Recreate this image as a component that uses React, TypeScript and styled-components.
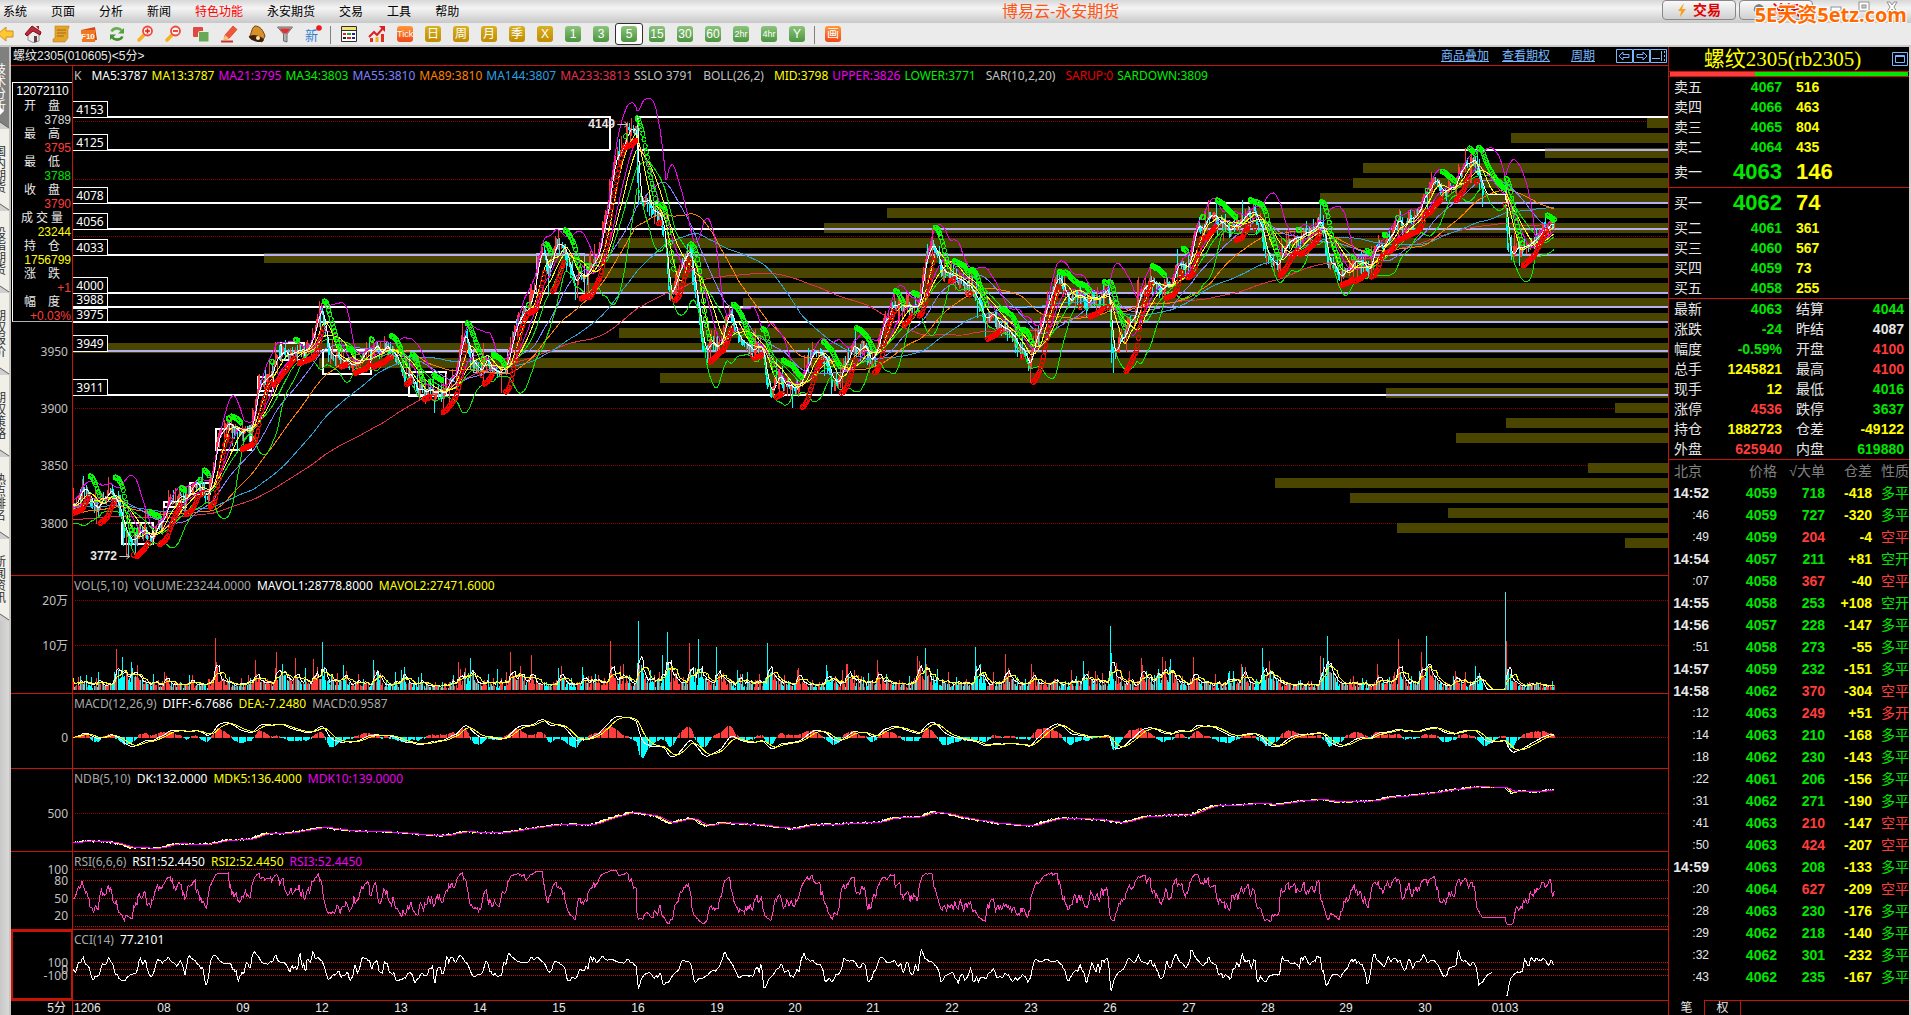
import React from "react";
import styled, { createGlobalStyle, css } from "styled-components";

const RED = "#c81408";
const UP = "#ff3c3c";
const DOWN = "#00ffff";
const GREEN = "#00e600";
const YELLOW = "#ffff00";
const PALE = "#e8e8e8";
const SANS = `"Liberation Sans", "Noto Sans CJK SC", sans-serif`;
const CHART = `"Noto Sans", "Noto Sans CJK SC", sans-serif`;

const Global = createGlobalStyle`
  * { box-sizing: border-box; }
  html, body { margin: 0; padding: 0; background: #000; }
  body { font: 12px/14px ${SANS}; color: ${PALE}; overflow: hidden; }
  button { font: inherit; padding: 0; border: 0; background: none; color: inherit; }
  table { border-collapse: separate; border-spacing: 0; table-layout: fixed; width: 100%; }
  td, th { padding: 0; font-weight: normal; text-align: left; white-space: nowrap; }
  svg { display: block; }
`;

/* ---------- market data ---------- */

type Pt = [number, number];

const X0 = 73;
const X1 = 1668;
const PITCH = 1.142;

const pricePath: Pt[] = [
  [73, 505], [78, 495], [82, 487], [88, 498], [94, 512], [100, 505], [106, 498], [110, 492], [116, 500], [121, 512],
  [124, 530], [130, 540], [136, 533], [142, 530], [148, 538], [154, 533], [160, 525], [164, 510], [170, 505], [178, 503],
  [186, 502], [190, 490], [196, 488], [205, 492], [211, 482], [214, 470], [216, 440], [222, 438], [228, 430], [236, 432],
  [244, 430], [250, 425], [254, 405], [258, 385], [265, 380], [272, 378], [276, 362], [282, 350], [290, 348], [300, 350],
  [306, 348], [310, 340], [314, 325], [318, 308], [321, 310], [324, 330], [328, 350], [336, 355], [342, 362], [350, 370],
  [357, 365], [362, 362], [370, 352], [378, 355], [386, 350], [393, 352], [400, 365], [408, 375], [416, 385], [430, 390],
  [440, 395], [448, 385], [455, 372], [459, 350], [462, 338], [467, 340], [471, 362], [478, 370], [486, 365], [495, 372],
  [505, 368], [509, 355], [514, 335], [519, 315], [527, 310], [533, 290], [537, 258], [543, 255], [548, 268], [556, 250],
  [564, 250], [570, 262], [575, 278], [580, 270], [586, 278], [590, 270], [596, 258], [600, 240], [605, 215], [611, 175],
  [617, 158], [623, 150], [628, 130], [632, 128], [636, 135], [638, 200], [640, 205], [646, 205], [652, 215], [660, 218],
  [664, 240], [669, 300], [676, 275], [682, 262], [688, 250], [691, 260], [694, 290], [698, 310], [701, 330], [704, 355],
  [710, 348], [718, 348], [724, 325], [728, 310], [732, 318], [738, 332], [745, 345], [755, 350], [762, 352], [765, 375],
  [771, 395], [778, 378], [785, 388], [792, 390], [800, 380], [806, 360], [814, 345], [820, 348], [826, 365], [832, 385],
  [838, 388], [843, 362], [850, 355], [862, 350], [870, 360], [876, 352], [880, 335], [885, 315], [892, 305], [902, 308],
  [912, 305], [918, 300], [922, 275], [926, 255], [932, 248], [938, 258], [948, 270], [960, 278], [972, 290], [980, 315],
  [990, 318], [1000, 328], [1010, 338], [1018, 345], [1024, 350], [1029, 362], [1033, 345], [1040, 325], [1048, 300],
  [1054, 285], [1060, 280], [1068, 300], [1076, 295], [1085, 300], [1095, 295], [1108, 290], [1111, 345], [1115, 350],
  [1120, 340], [1128, 325], [1136, 305], [1142, 290], [1150, 285], [1160, 290], [1170, 285], [1175, 270], [1184, 268],
  [1190, 255], [1194, 235], [1200, 225], [1208, 215], [1215, 220], [1225, 225], [1235, 228], [1245, 218], [1255, 215],
  [1260, 225], [1266, 255], [1275, 262], [1284, 245], [1294, 235], [1302, 238], [1312, 232], [1318, 220], [1325, 235],
  [1328, 265], [1335, 270], [1345, 275], [1355, 262], [1362, 270], [1370, 265], [1376, 245], [1386, 240], [1394, 232],
  [1404, 225], [1415, 215], [1423, 200], [1428, 190], [1436, 190], [1445, 188], [1455, 180], [1462, 166], [1468, 160],
  [1475, 162], [1478, 175], [1483, 194], [1505, 194], [1507, 250], [1511, 260], [1516, 240], [1526, 245], [1536, 238],
  [1545, 230], [1550, 222], [1555, 225],
];

const ndbPath: Pt[] = [
  [73, 843], [85, 841], [110, 842], [122, 845], [128, 848], [160, 848], [170, 844], [210, 844], [225, 840], [250, 839],
  [262, 834], [285, 833], [300, 831], [321, 827], [350, 831], [390, 832], [440, 836], [460, 832], [500, 833], [530, 828],
  [565, 824], [590, 825], [610, 818], [630, 812], [640, 814], [655, 816], [668, 823], [690, 818], [705, 826], [720, 823],
  [760, 825], [790, 829], [810, 825], [840, 824], [880, 822], [890, 818], [918, 817], [930, 812], [950, 815], [975, 820],
  [1000, 824], [1030, 826], [1050, 820], [1060, 818], [1100, 820], [1120, 823], [1145, 816], [1190, 815], [1200, 810],
  [1212, 806], [1240, 805], [1260, 803], [1270, 805], [1300, 801], [1320, 799], [1335, 802], [1370, 801], [1385, 798],
  [1420, 794], [1460, 789], [1468, 787], [1505, 787], [1510, 793], [1520, 791], [1535, 792], [1550, 790], [1555, 790],
];

/* x, top of the bar, 1 = rising */
const spikes: [number, number, number][] = [
  [116, 650, 1], [122, 657, 0], [131, 663, 0], [137, 665, 1], [164, 672, 1], [215, 638, 1], [255, 660, 1], [276, 653, 1],
  [282, 664, 0], [294, 658, 1], [313, 659, 1], [322, 642, 0], [343, 665, 0], [373, 660, 0], [401, 670, 0], [458, 662, 1],
  [470, 658, 0], [510, 652, 1], [519, 666, 1], [531, 655, 1], [558, 668, 0], [582, 667, 0], [610, 641, 1], [623, 664, 1],
  [638, 621, 0], [662, 655, 0], [667, 632, 0], [689, 643, 1], [698, 639, 0], [716, 647, 0], [767, 643, 0], [797, 670, 1],
  [826, 665, 0], [846, 664, 1], [877, 660, 1], [917, 656, 1], [925, 648, 0], [975, 647, 0], [1005, 654, 1],
  [1031, 664, 1], [1083, 661, 0], [1110, 626, 0], [1141, 658, 1], [1162, 657, 1], [1171, 659, 0], [1193, 657, 1],
  [1241, 664, 1], [1262, 648, 0], [1269, 661, 1], [1320, 656, 1], [1327, 636, 0], [1377, 664, 1], [1398, 639, 1],
  [1421, 653, 1], [1426, 636, 0], [1455, 671, 1], [1475, 666, 0], [1506, 641, 1],
];

const profile: (number | null)[] = [
  1647, 1511, 1545, 1363, 1353, 1320, 887, 824, 618, 264, 602, 586, 743, 926, 619, 73, 319, 660, 1386, 1615, 1506, 1456,
  null, 1588, 1275, 1350, 1448, 1397, 1625,
];

const rnd = (() => {
  let s = 20230103;
  return () => {
    s = (s * 1664525 + 1013904223) % 4294967296;
    return s / 4294967296;
  };
})();

const interp = (pts: Pt[], x: number) => {
  for (let i = 1; i < pts.length; i++) {
    if (x <= pts[i][0]) {
      const [ax, ay] = pts[i - 1];
      const [bx, by] = pts[i];
      return ay + ((by - ay) * (x - ax)) / (bx - ax);
    }
  }
  return pts[pts.length - 1][1];
};

const xs: number[] = [];
for (let x = X0; x <= 1555; x += PITCH) xs.push(x);
const N = xs.length;
const halted = (x: number) => x > 1483 && x < 1505;

let drift = 0;
const close = xs.map((x) => {
  if (halted(x)) return 194;
  drift = drift * 0.75 + (rnd() - 0.5) * 9;
  return interp(pricePath, x) + drift;
});
const open = close.map((c, i) => (i ? close[i - 1] : c + 2));
const wick = (i: number) => (halted(xs[i]) ? 0 : rnd() * rnd() * 9 + rnd() ** 8 * 16);
const high = close.map((c, i) => Math.min(c, open[i]) - wick(i));
const low = close.map((c, i) => Math.max(c, open[i]) + wick(i));

const sma = (src: number[], n: number, before?: number) =>
  src.map((_, i) => {
    let sum = 0;
    let k = 0;
    for (let j = i - n + 1; j <= i; j++) {
      if (j >= 0) {
        sum += src[j];
        k++;
      } else if (before !== undefined) {
        sum += before;
        k++;
      }
    }
    return sum / k;
  });

const ema = (src: number[], n: number) => {
  let e = src[0];
  return src.map((v) => (e += ((v - e) * 2) / (n + 1)));
};

const line = (ys: number[], skip?: (x: number) => boolean) => {
  let pen = "M";
  return ys
    .map((y, i) => {
      if (skip && skip(xs[i])) {
        pen = "M";
        return "";
      }
      const out = `${pen}${xs[i].toFixed(1)} ${y.toFixed(1)}`;
      pen = "L";
      return out;
    })
    .join("");
};

const mid = sma(close, 26, 512);
const dev = close.map((_, i) => {
  let s = 0;
  for (let j = i - 25; j <= i; j++) s += ((j < 0 ? 512 + (j % 2 ? 6 : -6) : close[j]) - mid[i]) ** 2;
  return Math.sqrt(s / 26) * 2;
});

const averages: [string, string][] = [
  [line(sma(close, 233, 520)), "#e03050"],
  [line(sma(close, 144, 508)), "#2ea0d8"],
  [line(sma(close, 89, 514)), "#ff8000"],
  [line(sma(close, 55, 506)), "#8080ff"],
  [line(sma(close, 34, 508)), "#00f000"],
  [line(sma(close, 21, 508)), "#f000f0"],
  [line(sma(close, 13, 506)), "#ffff00"],
  [line(mid), "#ffff00"],
  [line(mid.map((m, i) => m - dev[i])), "#f000f0"],
  [line(mid.map((m, i) => m + dev[i])), "#00f000"],
  [line(sma(close, 5)), "#ffffff"],
];

/* parabolic stop-and-reverse dots */
const sar = (() => {
  let rising = true;
  let value = low[0] + 4;
  let extreme = high[0];
  let af = 0.02;
  let up = "";
  let down = "";
  for (let i = 1; i < N; i++) {
    value += af * (extreme - value);
    if (rising ? low[i] > value : high[i] < value) {
      rising = !rising;
      value = extreme;
      extreme = rising ? high[i] : low[i];
      af = 0.02;
    } else if (rising ? high[i] < extreme : low[i] > extreme) {
      extreme = rising ? high[i] : low[i];
      af = Math.min(0.2, af + 0.02);
    }
    const dot = `M${(xs[i] - 2).toFixed(1)} ${value.toFixed(1)}a2 2.5 0 1 0 4 0a2 2.5 0 1 0 -4 0`;
    if (rising) up += dot;
    else down += dot;
  }
  return { up, down };
})();

const bars = (pick: (i: number) => boolean, top: (i: number) => number, bottom: (i: number) => number) => {
  let d = "";
  for (let i = 0; i < N; i++) {
    if (pick(i)) d += `M${Math.round(xs[i]) + 0.5} ${top(i).toFixed(1)}V${bottom(i).toFixed(1)}`;
  }
  return d;
};

const isUp = (i: number) => close[i] <= open[i];
const wickUp = bars(isUp, (i) => high[i], (i) => low[i] + 1);
const wickDown = bars((i) => !isUp(i), (i) => high[i], (i) => low[i] + 1);

const volume = xs.map((x) => (halted(x) ? 0.5 : 2 + rnd() * 6 + rnd() ** 8 * 14));
spikes.forEach(([sx, top]) => {
  const at = Math.round((sx - X0) / PITCH);
  volume[at] = 690 - top;
  for (let k = 1; k < 14; k++) {
    if (at + k < N && !halted(xs[at + k])) volume[at + k] += (690 - top) * 0.4 * Math.exp(-k / 4) * (0.4 + rnd());
    if (k < 6 && at - k >= 0 && !halted(xs[at - k])) volume[at - k] += (690 - top) * 0.2 * Math.exp(-k / 3) * rnd();
  }
});
const volUp = xs.map((_, i) => isUp(i));
spikes.forEach(([sx, , up]) => {
  volUp[Math.round((sx - X0) / PITCH)] = up === 1;
});
const volRed = bars((i) => volUp[i], (i) => 690 - volume[i], () => 690);
const volCyan = bars((i) => !volUp[i], (i) => 690 - volume[i], () => 690);
const mavol1 = line(sma(volume, 5).map((v) => 690 - v));
const mavol2 = line(sma(volume, 10).map((v) => 690 - v));

const e12 = ema(close, 12);
const e26 = ema(close, 26);
const diff = e12.map((v, i) => Math.tanh(((e26[i] - v) * 0.9) / 30) * 30);
const dea = ema(diff, 9);
const hist = diff.map((v, i) => (v - dea[i]) * 2);
const macdRed = bars((i) => hist[i] > 0, (i) => 736.5 - hist[i], () => 738);
const macdCyan = bars((i) => hist[i] <= 0, () => 737, (i) => 738 - hist[i]);
const diffLine = line(diff.map((v) => 737 - v));
const deaLine = line(dea.map((v) => 737 - v));

const ndbRaw = xs.map((x) => interp(ndbPath, x) + (halted(x) ? 0 : (rnd() - 0.5) * 2));
const ndb1 = line(ndbRaw);
const ndb2 = line(sma(ndbRaw, 5));
const ndb3 = line(sma(ndbRaw, 10));

const rsiLine = (() => {
  let gain = 2;
  let loss = 2;
  return line(
    close.map((c, i) => {
      const move = i ? close[i - 1] - c : 0;
      if (!halted(xs[i])) {
        gain += (Math.max(move, 0) - gain) / 7;
        loss += (Math.max(-move, 0) - loss) / 7;
      }
      return 926.5 - ((gain + 0.1) / (gain + loss + 0.2)) * 57.3;
    })
  );
})();

const cciLine = (() => {
  const tp = sma(close.map((c, i) => -(c + high[i] + low[i]) / 3), 2);
  const m = sma(tp, 14);
  return line(
    tp.map((t, i) => {
      let d = 0;
      for (let j = i - 13; j <= i; j++) d += j < 0 ? 4 : Math.abs(tp[j] - m[i]);
      d /= 14;
      const v = d < 0.01 ? 0 : (t - m[i]) / (0.015 * d);
      return Math.min(996, 969 - v * 0.0675);
    }),
    (x) => x > 1493 && x < 1506
  );
})();

const levels: [number, number][] = [
  [4153, 116], [4125, 149], [4078, 202], [4056, 228], [4033, 254], [4000, 292], [3988, 306], [3975, 321], [3949, 350],
  [3911, 394],
];

const rangeBoxes: [number, number, number, number][] = [
  [122, 523, 31, 21], [164, 502, 22, 5], [190, 483, 20, 11], [216, 429, 35, 21], [258, 377, 15, 14], [281, 343, 23, 17],
  [323, 350, 48, 24], [409, 372, 37, 24],
];

const faintBoxes: [number, number, number, number][] = [
  [473, 349, 34, 23], [536, 253, 48, 39],
];

/* ---------- shell ---------- */

const Shell = styled.div`
  display: flex;
  flex-direction: column;
  height: 100vh;
  min-width: 1200px;
`;

const MenuBar = styled.header`
  flex: none;
  display: flex;
  align-items: center;
  height: 23px;
  padding-left: 3px;
  background: linear-gradient(#d8d8d8, #f4f4f4 35%, #e4e4e4 60%, #c8c8c8);
  color: #000;
`;

const Menus = styled.nav`
  display: flex;
  gap: 24px;
`;

const MenuItem = styled.button<{ $hot?: boolean }>`
  color: ${(p) => (p.$hot ? "#ff0000" : "#000")};
  line-height: 18px;
`;

const Title = styled.h1`
  flex: 1;
  margin: 0;
  text-align: center;
  font-size: 16px;
  line-height: 20px;
  font-weight: normal;
  color: #ff5414;
`;

const WindowArea = styled.div`
  position: relative;
  display: flex;
  align-items: flex-start;
  align-self: stretch;
  gap: 3px;
  width: 249px;
`;

const PillButton = styled.button`
  display: flex;
  align-items: center;
  justify-content: center;
  gap: 6px;
  width: 74px;
  height: 20px;
  border: 1px solid #888;
  border-radius: 4px;
  background: linear-gradient(#fafafa, #d0d0d0);
  color: #e00000;
  font-size: 14px;
  font-weight: bold;
`;

const WindowButtons = styled.div`
  display: flex;
  gap: 16px;
  padding: 1px 0 0 14px;
`;

const Watermark = styled.strong`
  position: absolute;
  right: 4px;
  top: 2px;
  font: bold 20px/26px "Open Sans", "Noto Sans CJK SC", sans-serif;
  color: #ff6a00;
  white-space: nowrap;
  text-shadow: 1px 1px 0 #fff, -1px -1px 0 #fff, 1px -1px 0 #fff, -1px 1px 0 #fff;
`;

const ToolBar = styled.div`
  flex: none;
  display: flex;
  align-items: center;
  height: 24px;
  border-bottom: 2px solid #ccc8c6;
  background: #ebebeb;
  overflow: hidden;
`;

const Tool = styled.button<{ $active?: boolean }>`
  flex: none;
  display: grid;
  place-items: center;
  width: 28px;
  height: 22px;
  ${(p) =>
    p.$active &&
    css`
      border: 1px solid #303030;
      border-radius: 3px;
      background: #fff;
    `}
`;

const ToolShift = styled.div`
  display: flex;
  margin-left: -9px;
`;

const Badge = styled.span<{ $tone: "gold" | "green" | "orange" }>`
  display: grid;
  place-items: center;
  width: 16px;
  height: 16px;
  border-radius: 3px;
  color: #fff;
  font-size: 12px;
  line-height: 16px;
  overflow: hidden;
  background: ${(p) =>
    p.$tone === "gold"
      ? "linear-gradient(#d8b020, #c08c00)"
      : p.$tone === "green"
      ? "linear-gradient(#8cc47c, #4c9440)"
      : "linear-gradient(#ff9838, #f04818)"};
`;

const SmallBadge = styled(Badge)`
  font-size: 9px;
`;

const Divider = styled.span`
  width: 1px;
  height: 18px;
  margin: 2px 4px 0 3px;
  background: #808080;
`;

const Body = styled.div`
  flex: 1;
  min-height: 0;
  display: grid;
  grid-template-columns: 11px minmax(0, 1fr) 241px;
  border-right: 2px solid #d8d0d0;
`;

const SideBar = styled.nav`
  border-right: 2px solid #c8c4c0;
  background: linear-gradient(90deg, #c8c8c8, #d8d8d8);
  overflow: hidden;
`;

const SideTab = styled.button<{ $active?: boolean }>`
  position: relative;
  display: flex;
  flex-direction: column;
  align-items: center;
  justify-content: center;
  width: 9px;
  height: 82px;
  font-size: 12px;
  line-height: 12px;
  background: ${(p) => (p.$active ? "#808080" : "#f0efe8")};
  color: ${(p) => (p.$active ? "#fff" : "#303030")};
  overflow: hidden;
`;

const SideText = styled.span`
  width: 12px;
  margin: 0 3px 0 -6px;
  word-break: break-all;
`;

const Slant = styled.svg`
  position: absolute;
  left: 0;
  bottom: 0;
`;

/* ---------- chart ---------- */

const ChartArea = styled.main`
  display: grid;
  grid-template-rows: 19px 510fr 118fr 75fr 83fr 78fr 71fr 14px;
  min-height: 0;
  background: #000;
`;

const ChartHead = styled.div`
  display: flex;
  align-items: center;
  gap: 13px;
  padding-left: 2px;
  border-bottom: 1px solid ${RED};
`;

const Symbol = styled.span`
  flex: 1;
`;

const HeadLink = styled.a`
  color: #78b8ff;
  text-decoration: underline;
`;

const PeriodLink = styled(HeadLink)`
  margin: 0 8px;
`;

const Arrows = styled.div`
  padding-right: 1px;
`;

const Pane = styled.section`
  display: grid;
  grid-template-columns: 62px minmax(0, 1fr);
  min-height: 0;
  border-bottom: 1px solid ${RED};
`;

const Axis = styled.div<{ $focus?: boolean }>`
  position: relative;
  border-right: 1px solid ${RED};
  ${(p) =>
    p.$focus &&
    css`
      border: 1px solid ${RED};
      box-shadow: inset 0 0 0 1px ${RED};
    `}
`;

const Scale = styled.span`
  position: absolute;
  right: 4px;
  font: 12px/14px ${CHART};
  color: #c0c0c0;
  transform: translateY(-50%);
`;

const Plot = styled.div`
  position: relative;
  min-width: 0;
  min-height: 0;
  overflow: hidden;
`;

const Drawing = styled.svg`
  position: absolute;
  inset: 0;
  width: 100%;
  height: 100%;
  fill: none;
`;

const Legend = styled.div<{ $main?: boolean }>`
  position: relative;
  display: flex;
  gap: ${(p) => (p.$main ? "4px" : "6px")};
  padding: 2px 1px;
  font: 12px/16px ${CHART};
  white-space: pre;
`;

const Tint = styled.span<{ $c: string; $gap?: boolean }>`
  color: ${(p) => p.$c};
  margin-right: ${(p) => (p.$gap ? "6px" : "0")};
`;

const LevelTag = styled.span<{ $short?: boolean }>`
  position: absolute;
  left: -1px;
  width: 36px;
  height: ${(p) => (p.$short ? "14px" : "17px")};
  border: 1px solid #fff;
  background: #000;
  color: #fff;
  text-align: center;
  font: 12px/${(p) => (p.$short ? "12px" : "15px")} ${CHART};
`;

const Mark = styled.span`
  position: absolute;
  display: flex;
  align-items: center;
  font: bold 12px/14px ${SANS};
  color: #e8e8e8;
  transform: translate(-100%, -50%);
`;

const InfoBox = styled.dl`
  margin: 16px 0 0 1px;
  border: 1px solid #fff;
  border-right: 0;
  border-bottom-color: #b0b0b0;
  height: 240px;
  text-align: right;
`;

const InfoTime = styled.p`
  margin: 0;
  text-align: center;
  line-height: 17px;
  color: #fff;
`;

const InfoLabel = styled.dt<{ $wide?: boolean }>`
  display: flex;
  justify-content: space-between;
  padding: ${(p) => (p.$wide ? "0 9px 0 8px" : "0 12px 0 11px")};
  line-height: 13px;
`;

const InfoValue = styled.dd<{ $c: string }>`
  margin: 0;
  padding-right: 1px;
  line-height: 15px;
  color: ${(p) => p.$c};
`;

const TimeRow = styled.div`
  display: grid;
  grid-template-columns: 62px minmax(0, 1fr);
  line-height: 14px;
`;

const Period = styled.div`
  padding-right: 6px;
  border-right: 1px solid ${RED};
  text-align: right;
`;

const TimeTrack = styled.div`
  position: relative;
`;

const TimeMark = styled.span<{ $first?: boolean }>`
  position: absolute;
  transform: ${(p) => (p.$first ? "none" : "translateX(-50%)")};
`;

/* ---------- quote ---------- */

const Quote = styled.aside`
  display: flex;
  flex-direction: column;
  border-left: 1px solid ${RED};
  background: #000;
  font-size: 14px;
  overflow: hidden;
`;

const QuoteHead = styled.div`
  display: grid;
  grid-template-columns: 1fr 16px;
  align-items: center;
  padding: 0 1px 0 4px;
  height: 24px;
`;

const QuoteName = styled.h2`
  margin: 0;
  text-align: center;
  color: ${YELLOW};
  font: 21px/24px "Liberation Serif", "Noto Sans CJK SC", serif;
`;

const Ratio = styled.div`
  display: flex;
  height: 6px;
  padding: 0 1px;
  border: solid ${RED};
  border-width: 1px 0;
`;

const Part = styled.span<{ $c: string; $grow: number }>`
  flex: ${(p) => p.$grow};
  background: ${(p) => p.$c};
`;

const Grid = styled.table`
  border-bottom: 1px solid ${RED};
`;

const Row = styled.tr<{ $big?: boolean }>`
  height: ${(p) => (p.$big ? "30px" : "20px")};
`;

const Name = styled.th`
  padding-left: 5px;
`;

const Val = styled.td<{ $c: string; $big?: boolean; $left?: boolean }>`
  color: ${(p) => p.$c};
  font-weight: bold;
  font-size: ${(p) => (p.$big ? "22px" : "14px")};
  text-align: ${(p) => (p.$left ? "left" : "right")};
  padding-left: ${(p) => (p.$left ? "14px" : "0")};
`;

const Name2 = styled(Name)`
  padding-left: 14px;
`;

const LastVal = styled(Val)`
  padding-right: 5px;
`;

const TickHead = styled.th<{ $left?: boolean }>`
  height: 22px;
  color: #808080;
  text-align: ${(p) => (p.$left ? "left" : "right")};
  padding-left: ${(p) => (p.$left ? "5px" : "0")};
`;

const TickRow = styled.tr`
  height: 22px;
`;

const TickTime = styled.td<{ $minute: boolean }>`
  text-align: right;
  font-size: ${(p) => (p.$minute ? "14px" : "12px")};
  font-weight: ${(p) => (p.$minute ? "bold" : "normal")};
`;

const Nature = styled.td<{ $c: string }>`
  padding-left: 9px;
  color: ${(p) => p.$c};
`;

const NatureHead = styled(TickHead)`
  padding-left: 9px;
`;

const Tabs = styled.div`
  display: flex;
  height: 15px;
  margin-top: auto;
`;

const Tab = styled.button<{ $on?: boolean }>`
  width: 36px;
  border: solid ${RED};
  border-width: ${(p) => (p.$on ? "0 1px 0 0" : "1px 1px 0 0")};
  font-size: 12px;
  line-height: 14px;
`;

const TabRest = styled.span`
  flex: 1;
  border-top: 1px solid ${RED};
`;

/* ---------- toolbar drawings ---------- */

const Pic = ({ children }: { children: React.ReactNode }) => (
  <svg width="18" height="18" viewBox="0 0 18 18" fill="none" aria-hidden="true">
    {children}
  </svg>
);

const Lens = ({ plus }: { plus?: boolean }) => (
  <Pic>
    <path d="M3 15L7.500 10.500" stroke="#f8b020" strokeWidth="3.6" strokeLinecap="round" />
    <circle cx="11.500" cy="6" r="4.500" fill="#fff4f0" stroke="#f04838" strokeWidth="1.8" />
    <path d={plus ? "M9 6h5M11.500 3.500v5" : "M9 6h5"} stroke="#e02020" strokeWidth="1.6" />
  </Pic>
);

const pictures: [string, React.ReactNode][] = [
  ["后退", <Pic><path d="M2 9l8-7v4h7v6h-7v4z" fill="#ffc832" stroke="#d09010" /></Pic>],
  ["首页", <Pic><path d="M4 8l5-5 6 5v8l-6 1.500L4 15z" fill="#ececec" stroke="#909090" /><path d="M1 9l7-8 9 6-1 3-7-4-6 5z" fill="#c02838" stroke="#801018" /><path d="M12 1h3v4" fill="#a02028" /><path d="M10 11h3v6l-3 .5z" fill="#604040" /></Pic>],
  ["公告", <Pic><path d="M3 1h14v2l-1 1v9l-3 4H1v-3l2-1z" fill="#e4a42c" stroke="#c08018" strokeWidth=".6" /><path d="M5 5h9M5 8h9M5 11h7" stroke="#a06c10" /></Pic>],
  ["F10", <Pic><path d="M1 5l14-3 2 13-14 2z" fill="#d84818" /><path d="M1 5h14v12H2z" fill="#f07820" /><text x="1" y="14" fontSize="8" fontWeight="bold" fill="#fff" fontFamily="Liberation Sans">F10</text></Pic>],
  ["刷新", <Pic><path d="M3.500 6.500c2-4 8-4 10-1" stroke="#68b050" strokeWidth="2.6" /><path d="M16 3v5.500h-6z" fill="#50a040" /><path d="M14.500 11.500c-2 4-8 4-10 1" stroke="#409030" strokeWidth="2.6" /><path d="M2 15V9.500h6z" fill="#409030" /></Pic>],
  ["放大", <Lens plus />],
  ["缩小", <Lens />],
  ["叠加", <Pic><rect x="1" y="2" width="10" height="10" rx="1" fill="#e04840" /><rect x="6.500" y="6.500" width="10.500" height="10.500" rx="1" fill="#68a858" stroke="#e8f0e0" /></Pic>],
  ["画线", <Pic><path d="M5 10l8-9 4 3.500-8 9-5 1z" fill="#f05838" stroke="#c83018" strokeWidth=".6" /><path d="M5 10l4 3.500-5.500 1.500z" fill="#f8c880" /><path d="M1 16.500h12" stroke="#d03020" strokeWidth="2" /></Pic>],
  ["预警", <Pic><path d="M7 1c5 0 8 4 10 10l-3 6L1 12c3-3 2-9 6-11z" fill="#d89028" stroke="#704008" /><ellipse cx="8.500" cy="13.500" rx="7.500" ry="3" transform="rotate(14 8.500 13.500)" fill="#402008" /><circle cx="10" cy="13" r="2" fill="#f8e8b0" /></Pic>],
  ["筛选", <Pic><path d="M1.500 2h15l-5.500 7v8l-3.500-1V9z" fill="#b0b0b0" stroke="#707070" /><path d="M3.500 3.500h11l-4 5H8z" fill="#e03030" /></Pic>],
  ["新", <Pic><text x="1" y="15" fontSize="13" fill="#3080d0" fontFamily="Noto Sans CJK SC">新</text><circle cx="15" cy="3" r="2.800" fill="#f01818" /></Pic>],
];

const charts: [string, React.ReactNode][] = [
  ["报价", <Pic><path d="M1.500 1.500h15v15h-15z" fill="#fff" stroke="#303030" /><path d="M2 2h14v3H2z" fill="#f8e070" /><path d="M2 5.500h14" stroke="#303030" /><path d="M3 9h3" stroke="#f02020" strokeWidth="2" /><path d="M3 13h3" stroke="#202020" strokeWidth="2" /><path d="M7 9h4" stroke="#20a020" strokeWidth="2" /><path d="M7 13h4" stroke="#e02020" strokeWidth="2" /><path d="M12 9h3M12 13h3" stroke="#2020a0" strokeWidth="2" /></Pic>],
  ["K线", <Pic><path d="M1 12l5-5 3 3 7-8" stroke="#e02020" strokeWidth="2" /><path d="M11 1h6v6z" fill="#e02020" /><path d="M2 13h3v4H2zM13 9h3v8h-3z" fill="#e03020" /><path d="M7.500 12h3v5h-3z" fill="#f0b020" /></Pic>],
];

const golds = ["日", "周", "月", "季", "X"];
const greens = ["1", "3", "5", "15", "30", "60", "2hr", "4hr", "Y"];
const menus = ["系统", "页面", "分析", "新闻", "特色功能", "永安期货", "交易", "工具", "帮助"];
const sideTabs = ["技术分析", "国内期货", "股指期货", "期权报价", "期权策略", "热点排名", "新闻资讯"];

const Header = () => (
  <>
    <MenuBar>
      <Menus>
        {menus.map((m) => (
          <MenuItem key={m} $hot={m === "特色功能"}>{m}</MenuItem>
        ))}
      </Menus>
      <Title>博易云-永安期货</Title>
      <WindowArea>
        <PillButton>
          <svg width="10" height="14" viewBox="0 0 10 14"><path d="M7 0L1 8h3L3 14l6-8H5z" fill="#f8a020" /></svg>
          交易
        </PillButton>
        <PillButton>
          <svg width="14" height="14" viewBox="0 0 14 14"><path d="M7 1a6 5 0 1 1-2 10l-2 3V9A6 5 0 0 1 7 1z" fill="#808080" /></svg>
          论坛
        </PillButton>
        <WindowButtons>
          <svg width="12" height="12" viewBox="0 0 12 12"><rect x="1" y="6" width="10" height="4" fill="#fff" stroke="#909090" /></svg>
          <svg width="12" height="12" viewBox="0 0 12 12"><rect x="1" y="1" width="10" height="9" fill="#fff" stroke="#909090" /><rect x="4" y="4" width="4" height="3" fill="#ccc" stroke="#909090" /></svg>
          <svg width="12" height="12" viewBox="0 0 12 12"><path d="M1 1h3l2 3 2-3h3L8 6l3 5H8L6 8l-2 3H1l3-5z" fill="#fff" stroke="#909090" /></svg>
        </WindowButtons>
        <Watermark>5E天资5etz.com</Watermark>
      </WindowArea>
    </MenuBar>
    <ToolBar>
      <ToolShift>
        {pictures.map(([label, pic]) => (
          <Tool key={label} aria-label={label}>{pic}</Tool>
        ))}
      </ToolShift>
      <Divider />
      {charts.map(([label, pic]) => (
        <Tool key={label} aria-label={label}>{pic}</Tool>
      ))}
      <Tool><SmallBadge $tone="orange">Tick</SmallBadge></Tool>
      {golds.map((g) => (
        <Tool key={g}><Badge $tone="gold">{g}</Badge></Tool>
      ))}
      {greens.map((g) => (
        <Tool key={g} $active={g === "5"}>
          {g.length > 2 ? <SmallBadge $tone="green">{g}</SmallBadge> : <Badge $tone="green">{g}</Badge>}
        </Tool>
      ))}
      <Divider />
      <Tool><Badge $tone="orange">画</Badge></Tool>
    </ToolBar>
  </>
);

/* ---------- panes ---------- */

interface PaneProps {
  top: number;
  bottom: number;
  scale: [string, number][];
  focus?: boolean;
  main?: boolean;
  legend: [string, string, boolean?][];
  side?: React.ReactNode;
  overlay?: React.ReactNode;
  children: React.ReactNode;
}

const ChartPane = ({ top, bottom, scale, focus, main, legend, side, overlay, children }: PaneProps) => (
  <Pane>
    <Axis $focus={focus}>
      {side}
      {scale.map(([text, y]) => (
        <Scale key={text} style={{ top: `${((y - top) / (bottom - top)) * 100}%` }}>{text}</Scale>
      ))}
    </Axis>
    <Plot>
      <Drawing viewBox={`${X0} ${top} ${X1 - X0} ${bottom - top}`} preserveAspectRatio="none" shapeRendering="crispEdges">
        {children}
      </Drawing>
      {overlay}
      <Legend $main={main}>
        {legend.map(([text, color, gap]) => (
          <Tint key={text} $c={color} $gap={gap}>{text}</Tint>
        ))}
      </Legend>
    </Plot>
  </Pane>
);

const Dotted = ({ ys, color }: { ys: number[]; color: string }) => (
  <path d={ys.map((y) => `M${X0 + 2} ${y + 0.5}H${X1}`).join("")} stroke={color} strokeDasharray="1 1" />
);

const info: [string, string, string][] = [
  ["开盘", "3789", "#d8d8d8"], ["最高", "3795", "#ff3c3c"], ["最低", "3788", "#00e600"], ["收盘", "3790", "#ff3c3c"],
  ["成交量", "23244", "#ffff00"], ["持仓", "1756799", "#ffff00"], ["涨跌", "+1", "#ff3c3c"], ["幅度", "+0.03%", "#ff3c3c"],
];

const G = "#c0c0c0";

const PricePane = () => (
  <ChartPane
    main
    top={66}
    bottom={575}
    scale={[["3950", 352], ["3900", 409], ["3850", 466], ["3800", 524]]}
    legend={[
      ["K", G, true], ["MA5:3787", "#fff"], ["MA13:3787", "#ffff00"], ["MA21:3795", "#f000f0"],
      ["MA34:3803", "#00f000"], ["MA55:3810", "#8080ff"], ["MA89:3810", "#ff8000"], ["MA144:3807", "#2ea0e0"],
      ["MA233:3813", "#e03050"], ["SSLO 3791", G, true], ["BOLL(26,2)", G, true], ["MID:3798", "#ffff00"],
      ["UPPER:3826", "#f000f0"], ["LOWER:3771", "#00f000", true], ["SAR(10,2,20)", G, true], ["SARUP:0", "#e80000"],
      ["SARDOWN:3809", "#00f000"],
    ]}
    side={
      <InfoBox>
        <InfoTime>12072110</InfoTime>
        {info.map(([label, value, color]) => (
          <React.Fragment key={label}>
            <InfoLabel $wide={label.length > 2}>{[...label].map((ch) => <span key={ch}>{ch}</span>)}</InfoLabel>
            <InfoValue $c={color}>{value}</InfoValue>
          </React.Fragment>
        ))}
      </InfoBox>
    }
    overlay={
      <>
        {levels.map(([price, y]) => {
          const short = price === 3988 || price === 3975;
          return (
            <LevelTag key={price} $short={short} style={{ top: `${((y - (short ? 13 : 15) - 66) / 509) * 100}%` }}>
              {price}
            </LevelTag>
          );
        })}
        {([["4149", 629, 124], ["3772", 131, 556]] as [string, number, number][]).map(([text, x, y]) => (
          <Mark key={text} style={{ left: `${((x - X0) / (X1 - X0)) * 100}%`, top: `${((y - 66) / 509) * 100}%` }}>
            {text}
            <svg width="14" height="7" viewBox="0 0 14 7"><path d="M2 3.500h10M9 1l3.500 2.500L9 6" stroke="#c8c8c8" fill="none" /></svg>
          </Mark>
        ))}
      </>
    }
  >
    <Dotted ys={[121, 179, 236, 293, 351, 408, 465, 523]} color="#900000" />
    {profile.map((x, i) => x !== null && <rect key={i} x={x} y={118 + i * 15} width={X1 - x} height="10" fill="#4a4600" />)}
    {levels.map(([price, y]) => {
      const row = profile.findIndex((_, i) => y + 1 >= 118 + i * 15 && y < 128 + i * 15);
      const from = row >= 0 ? profile[row] : null;
      const split = price === 4153 || price === 4125;
      return (
        <g key={price}>
          <path d={split ? `M${X0} ${y + 1}H610M638 ${y + 1}H${X1}` : `M${X0} ${y + 1}H${X1}`} stroke="#fff" strokeWidth="2" />
          {from !== null && <path d={`M${from} ${y + 1}H${X1}`} stroke="#b4b0f4" strokeWidth="2" />}
        </g>
      );
    })}
    <path d="M610 116V150M638 116V150" stroke="#fff" strokeWidth="2" />
    {rangeBoxes.map(([x, y, w, h]) => (
      <rect key={x} x={x} y={y} width={w} height={h} stroke="#fff" strokeWidth="2" />
    ))}
    {faintBoxes.map(([x, y, w, h]) => (
      <rect key={x} x={x} y={y} width={w} height={h} stroke="#b4b0f4" />
    ))}
    <path d={wickUp} stroke={UP} />
    <path d={wickDown} stroke={DOWN} />
    {averages.map(([d, color], i) => <path key={i} d={d} stroke={color} />)}
    <path d={sar.up} stroke="#ff0000" />
    <path d={sar.down} stroke="#00ff00" />
  </ChartPane>
);

const dates: [string, number][] = [
  ["1206", 74], ["08", 164], ["09", 243], ["12", 322], ["13", 401], ["14", 480], ["15", 559], ["16", 638], ["19", 717],
  ["20", 795], ["21", 873], ["22", 952], ["23", 1031], ["26", 1110], ["27", 1189], ["28", 1268], ["29", 1346],
  ["30", 1425], ["0103", 1505],
];

const Charts = () => (
  <ChartArea>
    <ChartHead>
      <Symbol>螺纹2305(010605)&lt;5分&gt;</Symbol>
      <HeadLink href="#overlay">商品叠加</HeadLink>
      <HeadLink href="#options">查看期权</HeadLink>
      <PeriodLink href="#period">周期</PeriodLink>
      <Arrows>
        <svg width="51" height="15" viewBox="0 0 51 15" fill="none" stroke="#78b8ff">
          <path d="M.5.500h16v13H.5zM17.500.500h16v13h-16zM34.500.500h16v13h-16z" />
          <path d="M3 7l4-4v2.500h6v3H7V11zM31 7l-4-4v2.500h-6v3h6V11zM36 9.500h8M45.500 2v10" />
          <path d="M48.500 2v10" strokeDasharray="2 2" />
        </svg>
      </Arrows>
    </ChartHead>
    <PricePane />
    <ChartPane
      top={576}
      bottom={693}
      scale={[["20万", 601], ["10万", 646]]}
      legend={[["VOL(5,10)", "#a8a8a8"], ["VOLUME:23244.0000", "#a8a8a8"], ["MAVOL1:28778.8000", "#fff"], ["MAVOL2:27471.6000", YELLOW]]}
    >
      <Dotted ys={[600, 645]} color="#900000" />
      <path d={volRed} stroke={UP} />
      <path d={volCyan} stroke={DOWN} />
      <path d={mavol1} stroke="#fff" />
      <path d={mavol2} stroke={YELLOW} />
      <path d="M1505.500 592V690" stroke="#60e0e0" />
    </ChartPane>
    <ChartPane
      top={694}
      bottom={768}
      scale={[["0", 738]]}
      legend={[["MACD(12,26,9)", "#a8a8a8"], ["DIFF:-6.7686", "#fff"], ["DEA:-7.2480", YELLOW], ["MACD:0.9587", "#a8a8a8"]]}
    >
      <Dotted ys={[737]} color="#b00000" />
      <path d={macdRed} stroke={UP} />
      <path d={macdCyan} stroke={DOWN} />
      <path d={diffLine} stroke="#fff" />
      <path d={deaLine} stroke={YELLOW} />
    </ChartPane>
    <ChartPane
      top={769}
      bottom={851}
      scale={[["500", 814]]}
      legend={[["NDB(5,10)", "#a8a8a8"], ["DK:132.0000", "#fff"], ["MDK5:136.4000", YELLOW], ["MDK10:139.0000", "#f000f0"]]}
    >
      <Dotted ys={[813]} color="#900000" />
      <path d={ndb1} stroke="#fff" />
      <path d={ndb2} stroke={YELLOW} />
      <path d={ndb3} stroke="#ff00ff" />
    </ChartPane>
    <ChartPane
      top={852}
      bottom={929}
      scale={[["100", 870], ["80", 881], ["50", 899], ["20", 916]]}
      legend={[["RSI(6,6,6)", "#a8a8a8"], ["RSI1:52.4450", "#fff"], ["RSI2:52.4450", YELLOW], ["RSI3:52.4450", "#f000f0"]]}
    >
      <Dotted ys={[869, 880, 898, 915, 926]} color="#d01010" />
      <path d={rsiLine} stroke="#ff40c0" />
    </ChartPane>
    <ChartPane
      top={930}
      bottom={1000}
      focus
      scale={[["100", 963], ["0", 970], ["-100", 976]]}
      legend={[["CCI(14)", "#a8a8a8"], ["77.2101", "#fff"]]}
    >
      <Dotted ys={[962, 969, 975]} color="#d01010" />
      <path d={cciLine} stroke="#fff" />
    </ChartPane>
    <TimeRow>
      <Period>5分</Period>
      <TimeTrack>
        {dates.map(([text, x], i) => (
          <TimeMark key={text} $first={i === 0} style={{ left: `${((x - X0) / (X1 - X0)) * 100}%` }}>{text}</TimeMark>
        ))}
      </TimeTrack>
    </TimeRow>
  </ChartArea>
);

/* ---------- quote panel ---------- */

const asks: [string, string, string][] = [
  ["卖五", "4067", "516"], ["卖四", "4066", "463"], ["卖三", "4065", "804"], ["卖二", "4064", "435"], ["卖一", "4063", "146"],
];
const bids: [string, string, string][] = [
  ["买一", "4062", "74"], ["买二", "4061", "361"], ["买三", "4060", "567"], ["买四", "4059", "73"], ["买五", "4058", "255"],
];
const stats: [string, string, string, string, string, string][] = [
  ["最新", "4063", GREEN, "结算", "4044", GREEN],
  ["涨跌", "-24", GREEN, "昨结", "4087", PALE],
  ["幅度", "-0.59%", GREEN, "开盘", "4100", UP],
  ["总手", "1245821", YELLOW, "最高", "4100", UP],
  ["现手", "12", YELLOW, "最低", "4016", GREEN],
  ["涨停", "4536", UP, "跌停", "3637", GREEN],
  ["持仓", "1882723", YELLOW, "仓差", "-49122", YELLOW],
  ["外盘", "625940", UP, "内盘", "619880", GREEN],
];
/* time, price, lots, open-interest change, nature, 1 = buyer-initiated */
const ticks: [string, string, string, string, string, number][] = [
  ["14:52", "4059", "718", "-418", "多平", 0], [":46", "4059", "727", "-320", "多平", 0], [":49", "4059", "204", "-4", "空平", 1],
  ["14:54", "4057", "211", "+81", "空开", 0], [":07", "4058", "367", "-40", "空平", 1], ["14:55", "4058", "253", "+108", "空开", 0],
  ["14:56", "4057", "228", "-147", "多平", 0], [":51", "4058", "273", "-55", "多平", 0], ["14:57", "4059", "232", "-151", "多平", 0],
  ["14:58", "4062", "370", "-304", "空平", 1], [":12", "4063", "249", "+51", "多开", 1], [":14", "4063", "210", "-168", "多平", 0],
  [":18", "4062", "230", "-143", "多平", 0], [":22", "4061", "206", "-156", "多平", 0], [":31", "4062", "271", "-190", "多平", 0],
  [":41", "4063", "210", "-147", "空平", 1], [":50", "4063", "424", "-207", "空平", 1], ["14:59", "4063", "208", "-133", "多平", 0],
  [":20", "4064", "627", "-209", "空平", 1], [":28", "4063", "230", "-176", "多平", 0], [":29", "4062", "218", "-140", "多平", 0],
  [":32", "4062", "301", "-232", "多平", 0], [":43", "4062", "235", "-167", "多平", 0],
];

const Cols = ({ widths }: { widths: number[] }) => (
  <colgroup>
    {widths.map((w, i) => <col key={i} width={w || undefined} />)}
  </colgroup>
);

const Book = ({ rows, best }: { rows: [string, string, string][]; best: string }) => (
  <Grid>
    <Cols widths={[45, 68, 0]} />
    <tbody>
      {rows.map(([name, price, lots]) => {
        const big = name === best;
        return (
          <Row key={name} $big={big}>
            <Name scope="row">{name}</Name>
            <Val $c={GREEN} $big={big}>{price}</Val>
            <Val $c={YELLOW} $big={big} $left>{lots}</Val>
          </Row>
        );
      })}
    </tbody>
  </Grid>
);

const QuotePanel = () => (
  <Quote>
    <QuoteHead>
      <QuoteName>螺纹2305(rb2305)</QuoteName>
      <svg width="16" height="15" viewBox="0 0 16 15" fill="none" stroke="#78b8ff">
        <path d="M.5.500h15v13H.5zM3.500 3.500h9v7h-9zM3.500 4.500h9" />
      </svg>
    </QuoteHead>
    <Ratio>
      <Part $c="#ff3c3c" $grow={85} />
      <Part $c={GREEN} $grow={153} />
    </Ratio>
    <Book rows={asks} best="卖一" />
    <Book rows={bids} best="买一" />
    <Grid>
      <Cols widths={[45, 68, 55, 0]} />
      <tbody>
        {stats.map(([a, av, ac, b, bv, bc]) => (
          <Row key={a}>
            <Name scope="row">{a}</Name>
            <Val $c={ac}>{av}</Val>
            <Name2 scope="row">{b}</Name2>
            <LastVal $c={bc}>{bv}</LastVal>
          </Row>
        ))}
      </tbody>
    </Grid>
    <table>
      <Cols widths={[40, 68, 48, 47, 0]} />
      <thead>
        <tr>
          <TickHead $left>北京</TickHead>
          <TickHead>价格</TickHead>
          <TickHead>√大单</TickHead>
          <TickHead>仓差</TickHead>
          <NatureHead>性质</NatureHead>
        </tr>
      </thead>
      <tbody>
        {ticks.map(([time, price, lots, oi, nature, buy], i) => (
          <TickRow key={i}>
            <TickTime $minute={time.length > 3}>{time}</TickTime>
            <Val $c={GREEN}>{price}</Val>
            <Val $c={buy ? UP : GREEN}>{lots}</Val>
            <Val $c={YELLOW}>{oi}</Val>
            <Nature $c={buy ? UP : GREEN}>{nature}</Nature>
          </TickRow>
        ))}
      </tbody>
    </table>
    <Tabs>
      <Tab $on>笔</Tab>
      <Tab>权</Tab>
      <TabRest />
    </Tabs>
  </Quote>
);

const App = () => (
  <Shell>
    <Global />
    <Header />
    <Body>
      <SideBar>
        {sideTabs.map((t, i) => (
          <SideTab key={t} $active={i === 0}>
            <SideText>{t}</SideText>
            <Slant width="9" height="82" viewBox="0 0 9 82">
              <path d="M0 75l9 6v1H0z" fill="#d0d0d0" />
              <path d="M0 75l9 6" stroke="#606060" />
              {i === 0 && <path d="M0 60l4 4-4 4z" fill="#fff" />}
            </Slant>
          </SideTab>
        ))}
      </SideBar>
      <Charts />
      <QuotePanel />
    </Body>
  </Shell>
);

export default App;
